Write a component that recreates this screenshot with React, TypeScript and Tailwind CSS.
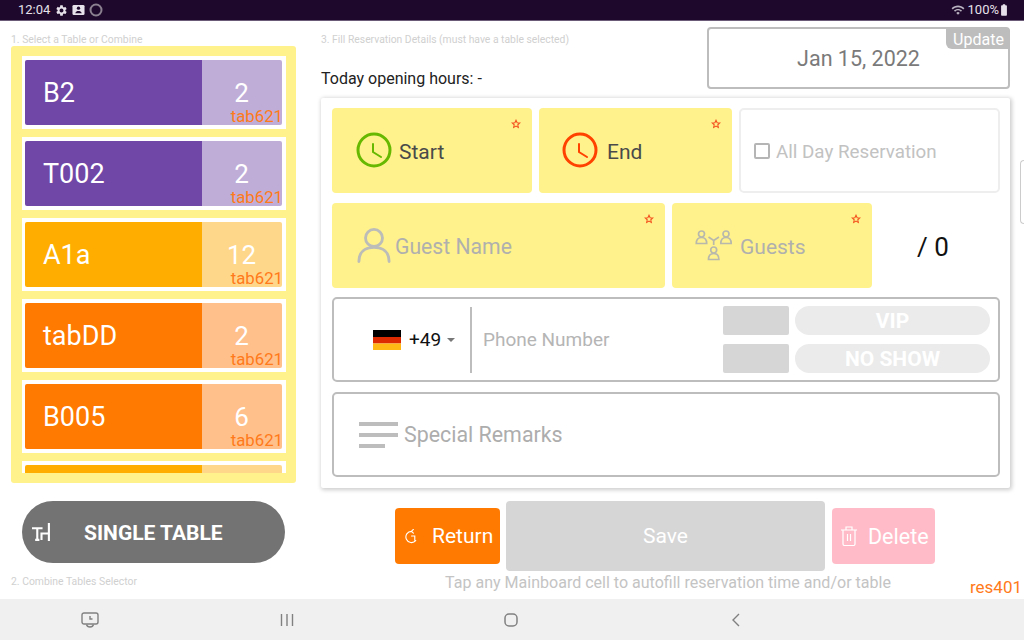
import { MdBatteryFull, MdSettings, MdWifi } from "react-icons/md";

const tables = [
  { name: "B2", seats: "2", main: "bg-[#7046a6]", side: "bg-[#bfadd8]" },
  { name: "T002", seats: "2", main: "bg-[#7046a6]", side: "bg-[#bfadd8]" },
  { name: "A1a", seats: "12", main: "bg-[#ffae00]", side: "bg-[#ffd78a]" },
  { name: "tabDD", seats: "2", main: "bg-[#ff7a00]", side: "bg-[#ffc08c]" },
  { name: "B005", seats: "6", main: "bg-[#ff7a00]", side: "bg-[#ffc08c]" },
  { name: "", seats: "", main: "bg-[#ffae00]", side: "bg-[#ffd78a]" },
];

const Star = () => (
  <svg viewBox="0 0 24 24" className="absolute right-[11px] top-[11px] w-[10px] h-[10px]" fill="none" stroke="#f4511e" strokeWidth="2.6">
    <path d="M12 3l2.7 5.9 6.3.7-4.7 4.3 1.3 6.4L12 17.1l-5.6 3.2 1.3-6.4L3 9.6l6.3-.7z" />
  </svg>
);

const Clock = ({ color }: { color: string }) => (
  <svg viewBox="0 0 36 36" className="w-[36px] h-[36px] shrink-0 -mt-[1px]" fill="none" stroke={color} strokeLinecap="round">
    <circle cx="18" cy="18" r="16" strokeWidth="3" />
    <path d="M17 12v8l8 5" strokeWidth="2" />
  </svg>
);

const GuestGlyph = ({ x, y }: { x: number; y: number }) => (
  <g transform={`translate(${x} ${y})`}>
    <circle cx="6" cy="3.500" r="3" />
    <path d="M.800 13c0-3.800 1.800-6 5.200-6s5.200 2.200 5.200 6z" />
  </g>
);

export default function App() {
  return (
    <div className="w-[1024px] h-[640px] flex flex-col overflow-hidden bg-white relative font-['Roboto',sans-serif]">
      <div className="h-[21px] shrink-0 bg-[#1e082c] border-b border-[#6b5a78] flex items-center justify-between pl-[18px] pr-[13px] text-[#e6e1ea] text-[13px]">
        <div className="flex items-center gap-[4px]">
          <span className="mr-[1px]">12:04</span>
          <MdSettings size={13} />
          <svg viewBox="0 0 14 12" className="w-[13px] h-[12px]">
            <rect x="0.500" y="0.500" width="13" height="11" rx="1.500" fill="#e6e1ea" />
            <circle cx="7" cy="4" r="1.800" fill="#1e082c" />
            <path d="M3.500 9.500c.5-2 2-2.500 3.500-2.500s3 .5 3.500 2.500z" fill="#1e082c" />
          </svg>
          <svg viewBox="0 0 14 14" className="w-[14px] h-[14px]" fill="none">
            <circle cx="7" cy="7" r="5.500" stroke="#8a8090" strokeWidth="2" />
          </svg>
        </div>
        <div className="flex items-center">
          <MdWifi size={14} className="mr-[3px] text-[#b9b2c0]" />
          <span>100%</span>
          <MdBatteryFull size={14} className="-ml-[2px]" />
        </div>
      </div>

      <div className="flex-1 flex min-h-0">
        <div className="w-[321px] shrink-0 pl-[11px] flex flex-col">
          <div className="h-[25px] pt-[13px] text-[10.400px] leading-[11px] text-[#d0d0d0]">1. Select a Table or Combine</div>
          <div className="w-[285px] h-[437px] bg-[#fff28c] rounded-[3px] pl-[11px] pr-[10px] py-[10px]">
            <div className="h-[417px] overflow-hidden flex flex-col gap-[8px]">
              {tables.map((t, i) => (
                <div key={i} className="h-[73px] shrink-0 bg-white pl-[3px] pr-[4px] py-[4px] flex">
                  <div className={`w-[177px] ${t.main} rounded-l-[2px] pl-[18px] pt-[2px] flex items-center text-white text-[27px]`}>{t.name}</div>
                  <div className={`flex-1 ${t.side} rounded-r-[2px] relative flex items-center justify-center pt-[2px] pr-[1px] text-white text-[26px]`}>
                    {t.seats}
                    {t.name && <span className="absolute right-[-1px] bottom-[-1px] text-[16.800px] leading-[20px] text-[#ff7a1a]">tab621</span>}
                  </div>
                </div>
              ))}
            </div>
          </div>
          <div className="mt-[18px] ml-[11px] w-[263px] h-[62px] shrink-0 rounded-full bg-[#737373] flex items-center text-white font-bold text-[21px] pl-[10px]">
            <svg viewBox="0 0 18 18" className="w-[19px] h-[19px] mr-[33px]" fill="none" stroke="#ffffff" strokeWidth="2">
              <path d="M0 5h10M5 5v11M3 16h4M8 10h9M9 9v7M16 0v17" />
            </svg>
            <span className="pt-[3px]">SINGLE TABLE</span>
          </div>
          <div className="mt-[13px] text-[10.400px] leading-[12px] text-[#d0d0d0]">2. Combine Tables Selector</div>
        </div>

        <div className="flex-1 flex flex-col min-w-0 relative">
          <div className="h-[77px] shrink-0 flex justify-between">
            <div className="flex flex-col">
              <div className="pt-[13px] text-[10.350px] leading-[11px] text-[#d0d0d0]">3. Fill Reservation Details (must have a table selected)</div>
              <div className="mt-[24px] text-[16px] leading-[20px] text-[#222222]">Today opening hours: -</div>
            </div>
            <div className="mt-[6px] mr-[14px] w-[303px] h-[62px] border-2 border-[#bdbdbd] rounded-[4px] relative flex items-center justify-center pt-[3px] text-[21.500px] text-[#7a7a7a]">
              Jan 15, 2022
              <span className="absolute right-[-2px] top-[-1px] w-[64px] h-[21px] pl-[1px] pt-[1px] rounded-bl-[6px] rounded-tr-[4px] bg-[#bdbdbd] text-white text-[16px] leading-[21px] text-center">Update</span>
            </div>
          </div>

          <div className="w-[689px] h-[390px] rounded-[2px] shadow-[1px_1px_4px_1px_rgba(0,0,0,0.2)] pl-[11px] pt-[10px] flex flex-col gap-[10px]">
            <div className="flex gap-[7px] h-[85px] shrink-0">
              <div className="w-[200px] bg-[#fff28c] rounded-[4px] relative flex items-center pl-[24px] gap-[7px] text-[21px] text-[#4a4a4a]">
                <Clock color="#66b800" />
                <span className="pt-[5px]">Start</span>
                <Star />
              </div>
              <div className="w-[193px] bg-[#fff28c] rounded-[4px] relative flex items-center pl-[23px] gap-[8px] text-[21px] text-[#4a4a4a]">
                <Clock color="#ff4200" />
                <span className="pt-[5px] ml-[1px]">End</span>
                <Star />
              </div>
              <div className="w-[261px] border-2 border-[#eeeeee] rounded-[5px] flex items-center pl-[13px] gap-[6px] text-[18.800px] text-[#c2c2c2]">
                <span className="w-[16px] h-[16px] border-2 border-[#b5b5b5] rounded-[2px] shrink-0" />
                <span className="pt-[3px]">All Day Reservation</span>
              </div>
            </div>

            <div className="flex gap-[7px] h-[85px] shrink-0">
              <div className="w-[333px] bg-[#fff28c] rounded-[4px] relative flex items-center pl-[25px] gap-[4px] text-[21.200px] text-[#b0b0ae]">
                <svg viewBox="0 0 36 38" className="w-[34px] h-[37px] shrink-0" fill="none" stroke="#bcbcb8" strokeWidth="3" strokeLinecap="round">
                  <circle cx="18" cy="11" r="9" />
                  <path d="M2 36c0-10 6-15 16-15s16 5 16 15" />
                </svg>
                <span className="pt-[3px]">Guest Name</span>
                <Star />
              </div>
              <div className="w-[200px] bg-[#fff28c] rounded-[4px] relative flex items-center pl-[23px] gap-[7px] text-[21px] text-[#b0b0ae]">
                <svg viewBox="0 0 38 31" className="w-[38px] h-[31px] shrink-0" fill="none" stroke="#b8b8ac" strokeWidth="1.700">
                  <GuestGlyph x={0.500} y={0.500} />
                  <GuestGlyph x={25} y={0.500} />
                  <GuestGlyph x={12.700} y={16.500} />
                  <path d="M13.500 7L18.700 10.500 24 7M18.700 10.500V15" />
                </svg>
                <span className="pt-[4px]">Guests</span>
                <Star />
              </div>
              <div className="w-[108px] flex items-center justify-center pt-[3px] text-[26px] text-[#111111]">/ 0</div>
            </div>

            <div className="w-[668px] h-[85px] shrink-0 border-2 border-[#bdbdbd] rounded-[5px] flex items-center -mt-[1px]">
              <div className="w-[138px] h-[66px] shrink-0 border-r-2 border-[#bdbdbd] flex items-center pl-[39px] pt-[1px] text-[19px] text-[#111111]">
                <svg viewBox="0 0 28 20" className="w-[28px] h-[20px] mr-[8px] shrink-0">
                  <rect width="28" height="7" fill="#000000" />
                  <rect y="7" width="28" height="6.500" fill="#dd2a00" />
                  <rect y="13.500" width="28" height="6.500" fill="#ffb814" />
                </svg>
                +49
                <span className="ml-[6px] w-0 h-0 border-x-[4px] border-x-transparent border-t-[4px] border-t-[#777777]" />
              </div>
              <div className="flex-1 pl-[11px] pt-[1px] text-[19px] text-[#b5b5b5]">Phone Number</div>
              <div className="w-[275px] pr-[8px] flex flex-col gap-[9px]">
                <div className="flex gap-[6px] h-[29px]">
                  <div className="w-[66px] bg-[#d6d6d6] rounded-[2px]" />
                  <div className="flex-1 bg-[#ebebeb] rounded-full text-white font-bold text-[21px] leading-[31px] text-center">VIP</div>
                </div>
                <div className="flex gap-[6px] h-[29px]">
                  <div className="w-[66px] bg-[#d6d6d6] rounded-[2px]" />
                  <div className="flex-1 bg-[#ebebeb] rounded-full text-white font-bold text-[21px] leading-[31px] text-center">NO SHOW</div>
                </div>
              </div>
            </div>

            <div className="w-[668px] h-[85px] shrink-0 border-2 border-[#bdbdbd] rounded-[5px] flex items-center pl-[25px] gap-[6px] text-[21.400px] text-[#adadad]">
              <svg viewBox="0 0 39 26" className="w-[39px] h-[26px] shrink-0" fill="#bdbdbd">
                <rect width="39" height="4" />
                <rect y="11" width="39" height="4" />
                <rect y="22" width="26" height="4" />
              </svg>
              <span className="pt-[2px]">Special Remarks</span>
            </div>
          </div>

          <div className="h-[70px] mt-[13px] shrink-0 flex items-center pl-[74px] gap-[6px]">
            <div className="w-[105px] h-[56px] bg-[#ff7a00] rounded-[4px] flex items-center pl-[9px] gap-[13px] pt-[1px] text-white text-[21px]">
              <svg viewBox="0 0 16 16" className="w-[15px] h-[15px] shrink-0" fill="none" stroke="#ffffff" strokeWidth="1.200" strokeLinecap="round">
                <path d="M8 2.500a6 6 0 1 0 4.500 10M10 .500L8 2.500l2 2M8 7.500h3.500v4.500" />
              </svg>
              <span className="pt-[1px]">Return</span>
            </div>
            <div className="w-[319px] h-[70px] bg-[#d6d6d6] rounded-[4px] flex items-center justify-center pt-[2px] text-white text-[21px]">Save</div>
            <div className="ml-[1px] w-[103px] h-[56px] bg-[#ffbcc8] rounded-[4px] flex items-center pl-[9px] gap-[11px] text-white text-[21.500px]">
              <svg viewBox="0 0 16 20" className="w-[16px] h-[20px] shrink-0" fill="none" stroke="#ffffff" strokeWidth="1.200">
                <path d="M0 4h16M5 4V1h6v3M2 4v14a1.500 1.500 0 0 0 1.500 1.500h9A1.500 1.500 0 0 0 14 18V4M6.500 8v7M9.500 8v7" />
              </svg>
              <span className="pt-[2px]">Delete</span>
            </div>
          </div>
          <div className="pr-[9px] text-center text-[16.050px] leading-[20px] text-[#c4c4c4] mt-[2px]">Tap any Mainboard cell to autofill reservation time and/or table</div>
          <span className="absolute right-[2px] bottom-[2px] text-[17px] leading-[20px] text-[#ff7a1a]">res401</span>
        </div>
      </div>

      <div className="h-[41px] shrink-0 bg-[#f0f0f0] flex items-center pl-[81px]">
        <svg viewBox="0 0 18 16" className="w-[18px] h-[16px]" fill="none" stroke="#808080" strokeWidth="1.400">
          <rect x="1" y="1" width="16" height="11" rx="2" />
          <path d="M9 4v3h2.500M5.500 12.500c.5 2 1.500 2.500 3.500 2.500s3-.5 3.500-2.500" />
        </svg>
        <svg viewBox="0 0 14 14" className="ml-[181px] w-[14px] h-[14px]" stroke="#808080" strokeWidth="1.400">
          <path d="M1.500 1v12M7 1v12M12.500 1v12" />
        </svg>
        <svg viewBox="0 0 14 14" className="ml-[210px] w-[14px] h-[14px]" fill="none" stroke="#808080" strokeWidth="1.500">
          <rect x="1" y="1" width="12" height="12" rx="4" />
        </svg>
        <svg viewBox="0 0 10 14" className="ml-[213px] w-[10px] h-[14px]" fill="none" stroke="#808080" strokeWidth="1.400">
          <path d="M8 1L2 7l6 6" />
        </svg>
      </div>

      <div className="absolute right-0 top-[160px] w-[4px] h-[64px] border border-r-0 border-[#cccccc] rounded-l-[4px] bg-white" />
    </div>
  );
}
